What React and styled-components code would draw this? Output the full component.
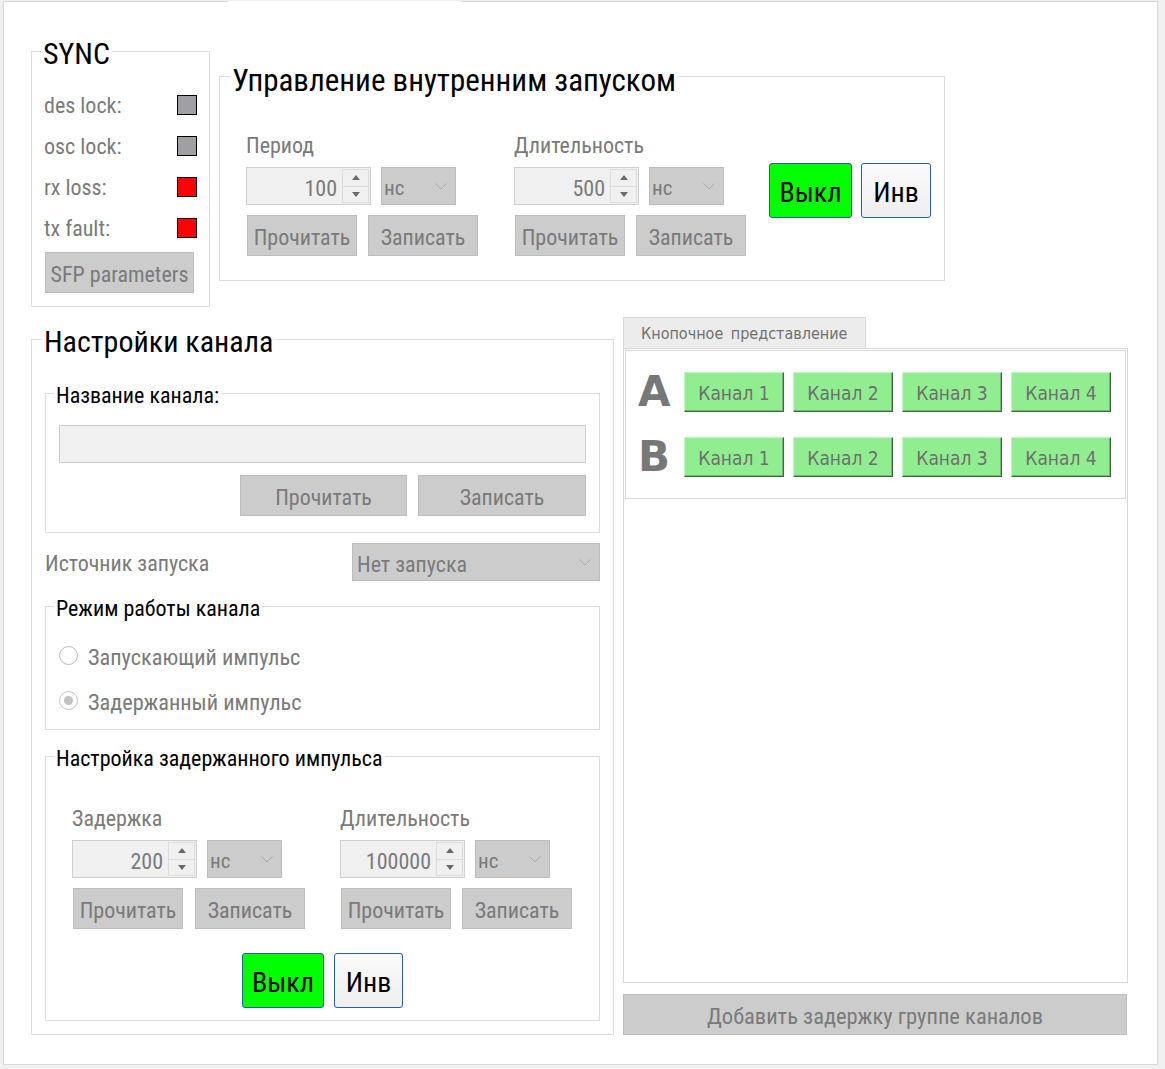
import React from 'react';
import styled, { createGlobalStyle } from 'styled-components';

const GlobalStyle = createGlobalStyle`
  body {
    margin: 0;
    background: #f0f0f0;
    font-family: "Roboto Condensed", "Open Sans", "Liberation Sans", sans-serif;
    color: #000;
  }
  * { box-sizing: border-box; }
`;

const DISABLED = '#7a7a7a';

// ---------- frame ----------

const Panel = styled.div`
  position: relative;
  margin: 1px 0 0 3px;
  width: 1155px;
  height: 1064px;
  border: 1px solid #d9d9d9;
  background: #fff;
  padding: 49px 0 0 27px;
`;

const TabGap = styled.div`
  position: absolute;
  top: -1px;
  left: 224px;
  width: 233px;
  height: 1px;
  background: #fff;
`;

const TopRow = styled.div`
  display: flex;
  align-items: flex-start;
  gap: 9px;
`;

const BottomRow = styled.div`
  display: flex;
  align-items: flex-start;
  gap: 9px;
  margin-top: 10px;
`;

// ---------- group box ----------

const Group = styled.div`
  width: ${p => p.$w}px;
  margin-top: ${p => p.$mt || 0}px;
  margin-left: ${p => p.$ml || 0}px;
  border: 1px solid #dcdcdc;
  padding-bottom: ${p => p.$pb || 0}px;
`;

const Legend = styled.div`
  width: fit-content;
  margin: ${p => p.$shift}px 0 0 ${p => p.$x}px;
  padding: 0 2px;
  background: #fff;
  font-size: ${p => p.$size}px;
  line-height: ${p => p.$size}px;
  color: #000;
  white-space: nowrap;
`;

// ---------- SYNC ----------

const StatusList = styled.div`
  margin-top: 15px;
  padding: 0 12px 0 12px;
`;

const StatusRow = styled.div`
  height: 41px;
  display: flex;
  align-items: center;
  justify-content: space-between;
`;

const StatusLabel = styled.span`
  font-size: 22px;
  color: #7a7a7a;
  padding-top: 1px;
`;

const Led = styled.span`
  width: 20px;
  height: 20px;
  border: 1px solid #000;
  background: ${p => p.$color};
`;

// ---------- controls ----------

const Button = styled.button`
  width: ${p => p.$w}px;
  height: ${p => p.$h || 41}px;
  margin: 0;
  padding: 3px 0 0;
  border: 1px solid #bdbdbd;
  background: #cccccc;
  color: ${DISABLED};
  font-family: inherit;
  font-size: ${p => p.$fs || 22}px;
  white-space: nowrap;
`;

const SfpButton = styled(Button)`
  margin: 4px 0 0 13px;
`;

const Toggle = styled.button`
  width: ${p => p.$w}px;
  height: 55px;
  margin: 0;
  padding: 3px 0 0;
  border: 1px solid #2a5f9e;
  border-radius: 3px;
  background: ${p => p.$on ? '#00ff00' : 'linear-gradient(#fbfbfb, #eeeeee)'};
  color: #000;
  font-family: inherit;
  font-size: 28px;
`;

const ToggleRow = styled.div`
  display: flex;
  gap: ${p => p.$gap || 9}px;
  margin-top: ${p => p.$mt || 0}px;
  justify-content: ${p => p.$center ? 'center' : 'flex-start'};
`;

const SpinBox = styled.div`
  width: 125px;
  height: 38px;
  display: flex;
  padding: 1px;
  border: 1px solid #cfcfcf;
  background: #f0f0f0;
`;

const SpinValue = styled.div`
  flex: 1;
  padding: 3px 5px 0 0;
  text-align: right;
  font-size: 22px;
  line-height: 33px;
  color: ${DISABLED};
`;

const SpinButtons = styled.div`
  width: 27px;
  display: flex;
  flex-direction: column;
  border: 1px solid #dcdcdc;
`;

const SpinButton = styled.div`
  flex: 1;
  display: flex;
  align-items: center;
  justify-content: center;
  & + & { border-top: 1px solid #dcdcdc; }
`;

const Arrow = styled.span`
  width: 0;
  height: 0;
  border-left: 4.5px solid transparent;
  border-right: 4.5px solid transparent;
  ${p => p.$up ? 'border-bottom: 5px solid #6a6a6a;' : 'border-top: 5px solid #6a6a6a;'}
`;

const Combo = styled.div`
  width: ${p => p.$w}px;
  height: 38px;
  display: flex;
  align-items: center;
  justify-content: space-between;
  padding: 0 8px 0 ${p => p.$pl || 2}px;
  border: 1px solid #bcbcbc;
  background: #cccccc;
  color: ${DISABLED};
  font-size: ${p => p.$fs || 21}px;
`;

const ComboText = styled.span`
  padding-top: 4px;
`;

const Chevron = () => (
  <svg width="12" height="7" viewBox="0 0 12 7">
    <polyline points="0.5,0.5 6,6 11.5,0.5" fill="none" stroke="#a9a9a9" strokeWidth="1" />
  </svg>
);

const Spin = ({ value }) => (
  <SpinBox>
    <SpinValue>{value}</SpinValue>
    <SpinButtons>
      <SpinButton><Arrow $up /></SpinButton>
      <SpinButton><Arrow /></SpinButton>
    </SpinButtons>
  </SpinBox>
);

const FieldColumn = styled.div`
  width: ${p => p.$w}px;
  flex-shrink: 0;
`;

const FieldLabel = styled.div`
  height: 24px;
  font-size: 22px;
  line-height: 24px;
  color: ${DISABLED};
`;

const Controls = styled.div`
  display: flex;
  gap: 10px;
  margin-top: 9px;
`;

const Actions = styled.div`
  display: flex;
  gap: ${p => p.$gap || 11}px;
  margin-top: ${p => p.$mt || 10}px;
  padding-left: ${p => p.$pl || 0}px;
  justify-content: ${p => p.$end ? 'flex-end' : 'flex-start'};
  padding-right: ${p => p.$pr || 0}px;
`;

const TimeField = ({ label, value, w, gap }) => (
  <FieldColumn $w={w}>
    <FieldLabel>{label}</FieldLabel>
    <Controls>
      <Spin value={value} />
      <Combo $w={75}><ComboText>нс</ComboText><Chevron /></Combo>
    </Controls>
    <Actions $pl={1} $gap={gap}>
      <Button $w={110}>Прочитать</Button>
      <Button $w={110}>Записать</Button>
    </Actions>
  </FieldColumn>
);

const FieldsRow = styled.div`
  display: flex;
  align-items: flex-start;
  margin-top: ${p => p.$mt}px;
  padding-left: 26px;
`;

// ---------- channel settings ----------

const NameInput = styled.div`
  height: 38px;
  margin: 18px 13px 0;
  border: 1px solid #cccccc;
  background: #f0f0f0;
`;

const SourceRow = styled.div`
  display: flex;
  align-items: center;
  justify-content: space-between;
  height: 38px;
  margin: 10px 13px 0;
`;

const SourceLabel = styled.span`
  font-size: 22px;
  color: ${DISABLED};
  padding-top: 2px;
`;

const RadioList = styled.div`
  margin-top: 13px;
  padding: 0 0 1px 13px;
`;

const RadioRow = styled.div`
  height: 45px;
  display: flex;
  align-items: center;
  gap: 10px;
`;

const RadioCircle = styled.span`
  width: 19px;
  height: 19px;
  border-radius: 50%;
  border: 1px solid ${p => p.$checked ? '#c4c4c4' : '#bdbdbd'};
  background: #fff;
  display: flex;
  align-items: center;
  justify-content: center;
  &::after {
    content: '';
    width: 9px;
    height: 9px;
    border-radius: 50%;
    background: ${p => p.$checked ? '#c2c2c2' : 'transparent'};
  }
`;

const RadioLabel = styled.span`
  font-size: 22.3px;
  color: ${DISABLED};
  padding-top: 2px;
`;

// ---------- right column ----------

const RightColumn = styled.div`
  width: 505px;
`;

const Tab = styled.div`
  width: 243px;
  height: 31px;
  padding: 6px 0 0 17px;
  border: 1px solid #d9d9d9;
  border-bottom: none;
  background: #ececec;
  font-family: "DejaVu Sans Condensed", "DejaVu Sans", sans-serif;
  font-size: 16px;
  color: #707070;
  word-spacing: 3px;
  white-space: nowrap;
`;

const TabPane = styled.div`
  height: 635px;
  border: 1px solid #d9d9d9;
  padding: 1px;
`;

const ChannelFrame = styled.div`
  border: 1px solid #d9d9d9;
  padding: 21px 0 21px 12px;
  display: flex;
  flex-direction: column;
  gap: 25px;
`;

const ChannelRow = styled.div`
  display: flex;
  align-items: center;
  gap: 9px;
`;

const Letter = styled.span`
  width: 37px;
  font-family: "DejaVu Sans", sans-serif;
  font-weight: bold;
  font-size: 42px;
  line-height: 40px;
  color: #777777;
`;

const ChannelButton = styled.button`
  width: 100px;
  height: 40px;
  margin: 0;
  padding: 2px 0 0;
  border: 1px solid;
  border-color: #c2f6c2 #3c6a3c #3c6a3c #c2f6c2;
  box-shadow: inset -1px -1px 0 #6fb86f;
  background: #90ee90;
  color: #6e6e6e;
  font-family: "DejaVu Sans Condensed", "DejaVu Sans", sans-serif;
  font-size: 19px;
`;

const AddButton = styled(Button)`
  display: block;
  margin-top: 11px;
`;

const channels = ['Канал 1', 'Канал 2', 'Канал 3', 'Канал 4'];

export default function App() {
  return (
    <>
      <GlobalStyle />
      <Panel>
        <TabGap />
        <TopRow>
          <Group $w={179} $pb={13}>
            <Legend $size={30} $shift={-13} $x={9}>SYNC</Legend>
            <StatusList>
              <StatusRow><StatusLabel>des lock:</StatusLabel><Led $color="#a0a0a4" /></StatusRow>
              <StatusRow><StatusLabel>osc lock:</StatusLabel><Led $color="#a0a0a4" /></StatusRow>
              <StatusRow><StatusLabel>rx loss:</StatusLabel><Led $color="#ff0000" /></StatusRow>
              <StatusRow><StatusLabel>tx fault:</StatusLabel><Led $color="#ff0000" /></StatusRow>
            </StatusList>
            <SfpButton $w={149}>SFP parameters</SfpButton>
          </Group>

          <Group $w={726} $mt={25} $pb={24}>
            <Legend $size={31} $shift={-12} $x={10}>Управление внутренним запуском</Legend>
            <FieldsRow $mt={38}>
              <TimeField label="Период" value="100" w={268} />
              <TimeField label="Длительность" value="500" w={255} />
              <ToggleRow $mt={29}>
                <Toggle $on $w={83}>Выкл</Toggle>
                <Toggle $w={70}>Инв</Toggle>
              </ToggleRow>
            </FieldsRow>
          </Group>
        </TopRow>

        <BottomRow>
          <Group $w={583} $mt={22} $pb={13}>
            <Legend $size={30} $shift={-13} $x={10}>Настройки канала</Legend>

            <Group $w={555} $mt={36} $ml={13} $pb={16}>
              <Legend $size={22} $shift={-9} $x={8}>Название канала:</Legend>
              <NameInput />
              <Actions $end $pr={13} $mt={12}>
                <Button $w={167}>Прочитать</Button>
                <Button $w={168}>Записать</Button>
              </Actions>
            </Group>

            <SourceRow>
              <SourceLabel>Источник запуска</SourceLabel>
              <Combo $w={248} $pl={4} $fs={22}><ComboText>Нет запуска</ComboText><Chevron /></Combo>
            </SourceRow>

            <Group $w={555} $mt={25} $ml={13} $pb={5}>
              <Legend $size={22} $shift={-9} $x={8}>Режим работы канала</Legend>
              <RadioList>
                <RadioRow><RadioCircle /><RadioLabel>Запускающий импульс</RadioLabel></RadioRow>
                <RadioRow><RadioCircle $checked /><RadioLabel>Задержанный импульс</RadioLabel></RadioRow>
              </RadioList>
            </Group>

            <Group $w={555} $mt={26} $ml={13} $pb={12}>
              <Legend $size={22} $shift={-9} $x={8}>Настройка задержанного импульса</Legend>
              <FieldsRow $mt={37}>
                <TimeField label="Задержка" value="200" w={268} gap={12} />
                <TimeField label="Длительность" value="100000" w={240} />
              </FieldsRow>
              <ToggleRow $center $gap={10} $mt={24}>
                <Toggle $on $w={82}>Выкл</Toggle>
                <Toggle $w={69}>Инв</Toggle>
              </ToggleRow>
            </Group>
          </Group>

          <RightColumn>
            <Tab>Кнопочное представление</Tab>
            <TabPane>
              <ChannelFrame>
                {['A', 'B'].map(letter => (
                  <ChannelRow key={letter}>
                    <Letter>{letter}</Letter>
                    {channels.map(name => <ChannelButton key={name}>{name}</ChannelButton>)}
                  </ChannelRow>
                ))}
              </ChannelFrame>
            </TabPane>
            <AddButton $w={504} $fs={22.5}>Добавить задержку группе каналов</AddButton>
          </RightColumn>
        </BottomRow>
      </Panel>
    </>
  );
}
